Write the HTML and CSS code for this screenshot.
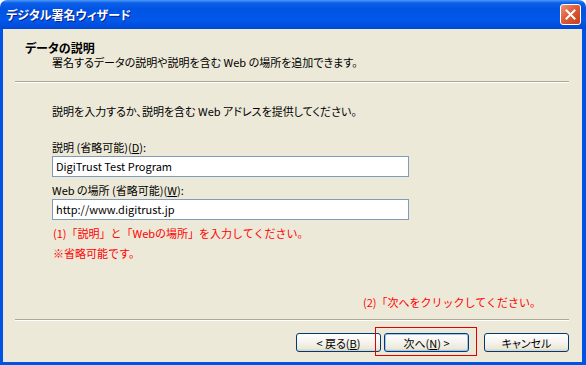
FILE: index.html
```html
<!DOCTYPE html>
<html lang="ja">
<head>
  <meta charset="UTF-8">
  <title>デジタル署名ウィザード</title>
  <link rel="stylesheet" href="styles.css">
</head>
<body>
  <div class="window">
    <div class="titlebar">
      <span class="title">デジタル署名ウィザード</span>
      <span class="close-btn">
        <svg width="13" height="13" viewBox="0 0 13 13"><path d="M2.5 2.5 L10.5 10.5 M10.5 2.5 L2.5 10.5" stroke="#fff" stroke-width="2" stroke-linecap="square"/></svg>
      </span>
    </div>
    <div class="frame">
      <div class="header">
        <div class="header-title">データの説明</div>
        <div class="header-sub">署名するデータの説明や説明を含む Web の場所を追加できます。</div>
      </div>
      <div class="separator"></div>
      <div class="content">
        <p class="intro">説明を入力するか、説明を含む Web アドレスを提供してください。</p>
        <label class="field-label">説明 (省略可能)(<u>D</u>):</label>
        <div class="text-input">DigiTrust Test Program</div>
        <label class="field-label">Web の場所 (省略可能)(<u>W</u>):</label>
        <div class="text-input">http://www.digitrust.jp</div>
        <p class="note">(1)「説明」と「Webの場所」を入力してください。</p>
        <p class="note">※省略可能です。</p>
        <p class="note note-right">(2)「次へをクリックしてください。</p>
      </div>
      <div class="separator separator-bottom"></div>
      <div class="buttons">
        <span class="btn">&lt; 戻る(<u>B</u>)</span>
        <span class="btn btn-default">次へ(<u>N</u>) &gt;</span>
        <span class="btn btn-cancel">キャンセル</span>
        <span class="highlight"></span>
      </div>
    </div>
  </div>
</body>
</html>
```

FILE: styles.css
```css
html, body {
  margin: 0;
  padding: 0;
  overflow: hidden;
}
body {
  background: #fff;
  font-family: "Noto Sans CJK JP", sans-serif;
  font-size: 11px;
  color: #000;
}
.window {
  width: 586px;
  height: 365px;
  overflow: hidden;
}
.titlebar {
  height: 29px;
  box-sizing: border-box;
  border-radius: 7px 7px 0 0;
  background: linear-gradient(#4a9af8 0, #0d5fe8 3px, #0054e3 9px, #0258ea 20px, #0049d6 29px);
  display: flex;
  align-items: center;
  justify-content: space-between;
  padding: 0 5px 0 6px;
}
.title {
  color: #fff;
  font-weight: bold;
  font-size: 12px;
  font-feature-settings: "palt";
  text-shadow: 1px 1px 0 #0a1e8c;
}
.close-btn {
  width: 19px;
  height: 19px;
  border: 1px solid #fff;
  border-radius: 3px;
  background-color: #d7512c;
  background-image: linear-gradient(135deg, #ec947a 0, #de5d38 45%, #c43e1c 100%);
  display: flex;
  align-items: center;
  justify-content: center;
}
.frame {
  height: 336px;
  box-sizing: border-box;
  background: #ece9d8;
  border: 3px solid #0054e3;
  border-top: none;
  border-right-width: 4px;
}
.header {
  padding: 12px 0 0 22px;
}
.header-title {
  font-weight: bold;
  font-size: 12px;
  line-height: 14px;
  font-feature-settings: "palt";
}
.header-sub {
  padding-left: 27px;
  line-height: 15px;
  font-feature-settings: "palt";
}
.separator {
  margin: 11px 13px 0 12px;
  border-top: 1px solid #aca899;
  border-bottom: 1px solid #fff;
}
.separator-bottom {
  margin-top: 10px;
}
.content {
  padding: 21px 0 0 49px;
  font-feature-settings: "palt";
}
.intro {
  margin: 0 0 22px;
  line-height: 14px;
}
.field-label {
  display: block;
  line-height: 14px;
  margin-bottom: 2px;
}
.text-input {
  width: 349px;
  height: 19px;
  line-height: 19px;
  border: 1px solid #7f9db9;
  background: #fff;
  padding: 0 3px;
  margin-bottom: 6px;
}
.note {
  margin: 6px 0 0;
  color: #ff0000;
  line-height: 14px;
  padding-left: 1px;
  font-feature-settings: normal;
}
.text-input + .note {
  margin-top: 0;
}
.note-right {
  margin-top: 35px;
  padding-left: 311px;
}
.buttons {
  display: flex;
  justify-content: flex-end;
  gap: 3px;
  padding: 12px 13px 0 0;
  position: relative;
}
.btn {
  width: 83px;
  height: 17px;
  border: 1px solid #003c74;
  border-radius: 3px;
  background: linear-gradient(#ffffff 0, #f4f3ee 50%, #ece9d8 85%, #d6d0c5 100%);
  display: flex;
  align-items: center;
  justify-content: center;
  font-feature-settings: "palt";
}
.btn-default {
  box-shadow: inset 0 0 0 1px #a6c4f0;
}
.btn-cancel {
  margin-left: 12px;
}
.highlight {
  position: absolute;
  left: 372px;
  top: 6px;
  width: 100px;
  height: 27px;
  border: 1px solid #e00000;
}
```
